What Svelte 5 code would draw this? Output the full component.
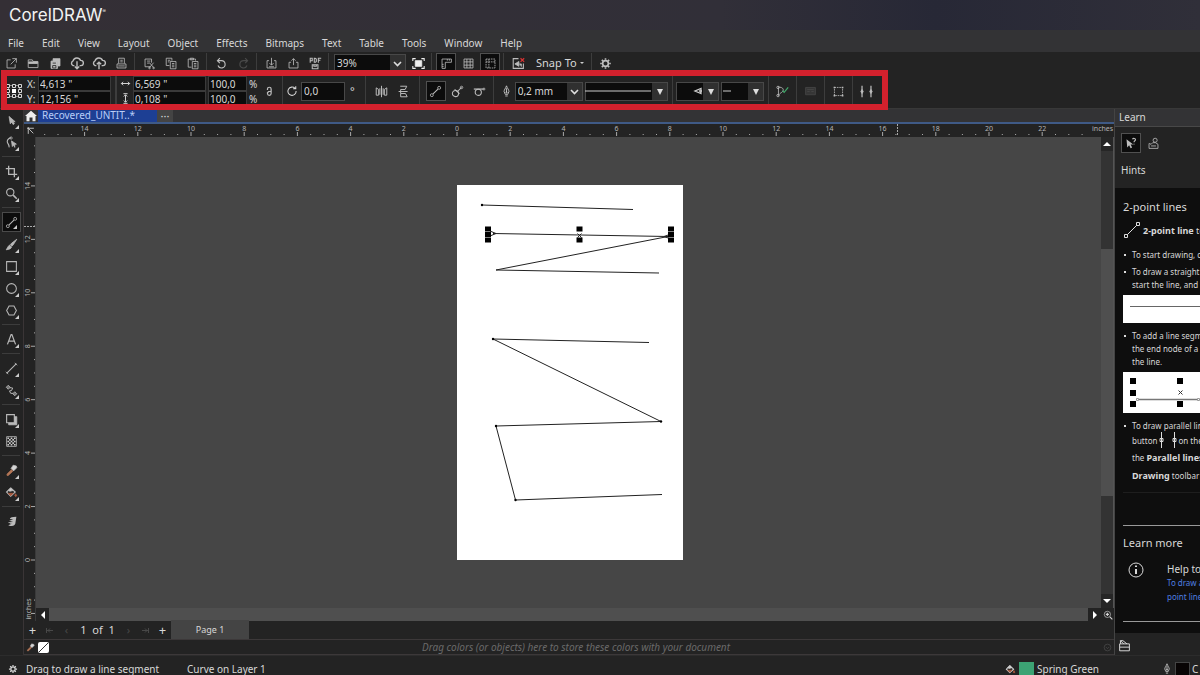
<script>
  const icons = {
    new: '<path d="M7 3.5H2.5v10h10V9M9 2h5v5M14 2 7 9"/>',
    open: '<path d="M1.5 13V3.5h5l1 2h6V13z"/><path fill="currentColor" d="M2 6h11v2H2z"/>',
    save: '<path fill="currentColor" d="M5 2h8.500v9H11V5H5z"/><path fill="currentColor" d="M2.500 5h8v9h-8z"/><path stroke="#232323" d="M4.500 7.500h4M4.500 10.500h4v3h-4z"/>',
    cloudDown: '<path stroke-width="1.600" d="M5 11H3.500a3 3 0 0 1 0-5.500A4.500 4.500 0 0 1 12 5a3 3 0 0 1 .5 6H11M8 6v8M5.500 12 8 14.500 10.500 12"/>',
    cloudUp: '<path stroke-width="1.600" d="M5 11H3.500a3 3 0 0 1 0-5.500A4.500 4.500 0 0 1 12 5a3 3 0 0 1 .5 6H11M8 15V7M5.500 9.500 8 7l2.500 2.500"/>',
    print: '<path d="M4.500 8V1.500h7V8M6.500 4h3M6.500 6h3M2.500 8.500h11v5h-11zM4 11h8"/>',
    cut: '<path d="M9 12H2.500V2.500h8V7M5 5h4M5 7.500h3M8 7l5 6M13 7l-5 6"/><circle cx="8" cy="13.500" r="1"/><circle cx="13" cy="13.500" r="1"/>',
    copy: '<path d="M5.500 10.500h-4v-9h7v3M3.500 4h3M3.500 6h2M6.500 5.500h7v9h-7zM8.500 8h3M8.500 10h3M8.500 12h3"/>',
    paste: '<path d="M5.500 12.500h-4v-10h9v2M4 1.500h4v2H4zM6.500 5.500h7v9h-7zM8.500 8h3M8.500 10h3M8.500 12h3"/>',
    undo: '<path stroke-width="1.400" d="M3 4.500h5a4.500 4.500 0 1 1-4.300 6M6 1.500l-3 3 3 3"/>',
    redo: '<g stroke="#4a4a4a"><path stroke-width="1.400" d="M13 4.500H8a4.500 4.500 0 1 0 4.300 6M10 1.500l3 3-3 3"/></g>',
    import: '<path d="M5 4.500H2.500v9h11v-9H11M8 1v9M5.500 7.500 8 10l2.500-2.500M5 12h6"/>',
    export: '<path d="M5 6.500H2.500v7h11v-7H11M8 10V2M5.500 4.500 8 2l2.500 2.500"/>',
    pdf: '<path stroke-width="1.300" d="M1.500 7V1.500h2.500v3H1.500M6.500 1.500h1l1.500 1v3l-1 1H6.500zM11.500 7V1.500H15M11.500 4H14"/><path stroke-width="1.300" d="M4 9.500h7v5H4zM6 9.500v2h3V10"/>',
    screen: '<path fill="#eee" stroke="#eee" d="M4 4.500h8v7H4z"/><path stroke="#eee" stroke-width="1.300" d="M1 5V2h3.500M11.500 2H15v3M15 11v3h-3.500M4.500 14H1v-3"/>',
    ruler: '<path d="M2.500 14V2.500H14v4H6.500V14zM9 2.500v2M11.500 2.500v2M2.500 9h2M2.500 11.500h2"/>',
    grid: '<path d="M2.500 2.500h11v11h-11zM6 2.500v11M10 2.500v11M2.500 6h11M2.500 10h11"/>',
    guides: '<path stroke-dasharray="2 1" d="M2.500 2.500h11v11h-11zM6 2.500v11M2.500 6h11"/>',
    snap: '<path stroke-width="1.300" d="M8 2H1.500v12H14V8"/><path fill="currentColor" d="m3.500 8.500 5-3v6zM9 8.500h2.500V12"/><path stroke="#d33" stroke-width="1.500" d="m10.500 1.500 4.500 4.500m0-4.500-4.500 4.500"/>',
    gear: '<circle cx="8" cy="8" r="3.500" stroke-width="2"/><path stroke-width="2" d="M8 1.500v2M8 12.500v2M1.500 8h2M12.500 8h2M3.500 3.500 5 5M11 11l1.500 1.500M3.500 12.500 5 11M11 5l1.500-1.500"/>',
    origin: '<path stroke="#888" d="M2 2.500h12M2 13.500h12M2.500 2v12M13.500 2v12"/><path fill="#232323" d="M.5 1.500h3v3h-3zM6.500 1.500h3v3h-3zM12.500 1.500h3v3h-3zM.5 6.500h3v3h-3zM12.500 6.500h3v3h-3zM.5 11.500h3v3h-3zM6.500 11.500h3v3h-3zM12.500 11.500h3v3h-3z"/><path fill="#fff" stroke="none" d="M6 6h4v4H6z"/>',
    width: '<path stroke-width="1.400" d="M2 8h12M4.500 5.500 2 8l2.500 2.500M11.500 5.500 14 8l-2.500 2.500"/>',
    height: '<path stroke-width="1.400" d="M8 3v10M5.500 5 8 2.500 10.500 5M5.500 11 8 13.500 10.500 11M5 1h6M5 15h6"/>',
    lock: '<path stroke-width="1.500" d="M5.500 6V5a2 2 0 0 1 4.500 0v3.500M7 8h3v2.500a2.200 2.200 0 0 1-4.500 0V9.500L7 8"/>',
    rotate: '<path stroke-width="1.400" d="M12 4.500A5.500 5.500 0 1 0 13.500 8M13 1.500V5H9.500"/>',
    mirrorH: '<path stroke-width="1.200" d="M1.500 3.500v9h3v-7l-3-2M8 1v14M14.500 3.500v9h-3v-7l3-2M6 4v8M10 4v8"/>',
    mirrorV: '<path stroke-width="1.200" d="M4 1.500h8l-2 4H4.500M2 8h11M4.500 10.500h6l2 4h-8zM4.500 5.500v5"/>',
    twoPoint: '<path stroke-width="1.300" d="M5 11 11 5"/><circle cx="3.500" cy="12.500" r="1.800"/><circle cx="12.500" cy="3.500" r="1.800"/>',
    perp: '<circle cx="5.500" cy="10.500" r="3.800" stroke-width="1.300"/><path stroke-width="1.300" d="m8 8 5-5M4.500 5.500l6 5"/><circle cx="13" cy="3" r="1.500"/>',
    tangent: '<circle cx="6.500" cy="9" r="3.800" stroke-width="1.300"/><path stroke-width="1.500" d="M1 5h12"/><circle cx="13.500" cy="5" r="1.200"/>',
    pen: '<path d="M8 1c-1 3-3 5-3 7l1.500 3.500h3L11 8c0-2-2-4-3-7zM6.500 13.500h3M8 4v5"/><circle cx="8" cy="9" r=".8"/>',
    curve: '<path d="M2.500 2.500c7 0 8 4 4.500 6.500-2 1.500-3 2-4.500 4.500M3 3v9"/><circle cx="2.500" cy="3" r="1.500"/><circle cx="2.500" cy="13" r="1.500"/><path stroke="#42a86b" stroke-width="1.500" d="m8 7 2 2 5-6"/>',
    wrap: '<g stroke="#484848"><path fill="#363636" d="M2 3h12v9H2z"/><path d="M4 5.500h8M4 8h3M9 8h3"/></g>',
    bounding: '<path stroke-dasharray="2 1" d="M3 3h10v10H3z"/><path fill="currentColor" stroke="none" d="M2 2h2v2H2zM12 2h2v2h-2zM2 12h2v2H2zM12 12h2v2h-2z"/>',
    parallel: '<path stroke-width="1.500" d="M2.500 1v14M13.500 1v14"/><path fill="currentColor" d="m2.500 5.500 1.500 2.500-1.500 2.500L1 8zM13.500 5.500 15 8l-1.500 2.500L12 8z"/>',
    pick: '<path fill="currentColor" d="m5 3 1.500 9L8.500 10l1.500 3 1.500-1-1.500-2.500h2.500z"/>',
    shape: '<path stroke-width="1.400" d="M7 2C4 3 2 5.500 3 8s2.500 3 2 6"/><circle cx="7.500" cy="2.500" r="1.400"/><path fill="currentColor" d="m8 6 1 7 1.500-2 1.500 3v-4h2z"/>',
    crop: '<path stroke-width="1.600" d="M4.500 1v10.500H15M1 4.500h10.500V15"/>',
    zoom: '<circle cx="6.500" cy="6.500" r="4.500" stroke-width="1.400"/><path stroke-width="2" d="m10 10 4.500 4.500"/>',
    brush: '<path fill="currentColor" d="M14.500 1.500 8 6.500 6.500 8 8.500 10l1.500-1.500zM6 9c-2 0-2 2-4.500 5.500C5 14 8 13 8 11z"/>',
    rect: '<path stroke-width="1.300" d="M2 2h12v12H2z"/>',
    ellipse: '<circle cx="8" cy="8" r="6" stroke-width="1.300"/>',
    polygon: '<path stroke-width="1.300" d="M5 2.500h6L14 8l-3 5.500H5L2 8z"/>',
    textTool: '<path stroke-width="1.500" d="M3 14 7.500 2h1L13 14M4.500 10h7"/>',
    dimension: '<path stroke-width="1.400" d="M2 14 14 2"/><path d="m1 12 3 3M12 1l3 3"/>',
    connector: '<path fill="#777" d="m4 1.500 2.500 2.500L4 6.500 1.500 4zM12 9.500l2.500 2.500-2.500 2.500L9.500 12z"/><path stroke-width="1.200" d="M6 4.500 9.500 5 8 8l-2.500.5L7 11.500h3"/>',
    shadow: '<path fill="#bbb" stroke="#bbb" d="M4.500 4.500h10v10h-10z"/><path fill="#232323" stroke-width="1.400" d="M2 2h9.500v10H2z"/>',
    checker: '<path fill="#222" stroke="#bbb" d="M2 2h12v12H2z"/><path stroke="#ccc" stroke-width="2" stroke-dasharray="2 2" d="M3 4h10M3 8h10M3 12h10"/><path stroke="#ccc" stroke-width="2" stroke-dasharray="2 2" d="M5 6h8M5 10h8"/>',
    dropper: '<path fill="#d5d5d5" stroke="#bbb" d="M10 1.500 14 2.500l.5 2-4 4-3-3z"/><path fill="#b87858" stroke="#b87858" d="m8 7 1.500 2-5.500 5H2.500v-1.500z"/>',
    bucket: '<path stroke-width="1.500" d="m7 2.500 5.500 5L7 12.500l-5-5z"/><path fill="#ccc" d="m7 2.500 3 3-4 1-2-1z"/><path fill="#a9583c" stroke="#a9583c" d="M4 9h6l-3 3zM13 9.500l1.500 2.500-1.500 1-1-1z"/>',
    feather: '<path fill="#bbb" stroke="none" d="M14 2c-5 0-8 1-8 3l4 .5L5 7l5 1.500-6 .5c1 2 3 2 5 1.500L4 12.500c5 2.500 9 .5 9-4z"/>',
    home: '<path fill="currentColor" stroke="none" d="M8 1 0 8h2v7h4v-5h4v5h4V8h2z"/>',
    corner: '<path stroke-width="1.500" d="M2 4h12M4 2v12M5 5l8 8"/>',
    hint: '<path fill="currentColor" stroke="none" d="m2 3 1 11 2.500-3 2 4 2-1-2-4H11z"/><path stroke-width="1.500" d="M10 3c1-2 4-1 4 .5S12 5 12 7M12 9v1"/>',
    person: '<circle cx="10" cy="4" r="2.500"/><path d="M2.500 8v6h11V9l-3-2H7L5 9 3 8zM5 11h6"/>',
    bag: '<path stroke-width="1.200" d="M2 6h12v8.500H2zM2 10h12M3 6V2h3l5 4M3 2l4 4"/>',
    info: '<circle cx="8" cy="8" r="7"/><path stroke-width="2" d="M8 7v5M8 3.500v1.500"/>',
    navZoom: '<circle cx="7" cy="7" r="5"/><path stroke-width="1.700" d="m11 11 4 4M4.500 7h5M7 4.500v5"/>',
    expand: '<circle cx="8" cy="8" r="6"/><path d="m5 7 3 3 3-3"/>'
  };

  const menus = ['File', 'Edit', 'View', 'Layout', 'Object', 'Effects', 'Bitmaps', 'Text', 'Table', 'Tools', 'Window', 'Help'];
  const fileTools = [
    ['new', 'open', 'save', 'cloudDown', 'cloudUp', 'print'],
    ['cut', 'copy', 'paste'],
    ['undo', 'redo'],
    ['import', 'export', 'pdf']
  ];
  const toolbox = [
    ['pick', 'shape'],
    ['crop', 'zoom'],
    ['twoPoint', 'brush', 'rect', 'ellipse', 'polygon'],
    ['textTool'],
    ['dimension', 'connector'],
    ['shadow', 'checker'],
    ['dropper', 'bucket'],
    ['feather']
  ];
  const noFlyout = ['checker', 'feather'];

  // Ruler scale, in half-inch steps from the page origin.
  const across = Array.from({ length: 80 }, (_, i) => {
    const half = i - 31;
    return { x: 421 + half * 13.3, label: half % 4 === 0 && half < 46 ? Math.abs(half / 2) : null };
  });
  const down = Array.from({ length: 36 }, (_, i) => {
    const half = i - 4;
    return { y: 423 - half * 13.36, label: half % 4 === 0 && half >= 0 ? half / 2 : null, long: half % 4 === 0 };
  });

  const handles = [488, 579.5, 671].flatMap((x) => [229.5, 235, 240.5].map((y) => ({ x, y }))).filter((h) => h.x !== 579.5 || h.y !== 235);
  const nodes = [[482, 205], [493, 339], [661, 421.5], [496, 426], [515.5, 500]];
  const hintHandles = [[7, 6], [7, 18], [7, 29], [54, 6], [54, 29]];
</script>

{#snippet icon(name, size = 14)}
  <svg class="icon" width={size} height={size} viewBox="0 0 16 16" fill="none" stroke="currentColor" aria-hidden="true">{@html icons[name]}</svg>
{/snippet}

{#snippet tool(name, on = false)}
  <button class="tool" class:on aria-label={name}>{@render icon(name, name.startsWith('cloud') ? 14 : 13)}</button>
{/snippet}

<div class="app">
  <header class="title"><span class="logo">CorelDRAW<sup>®</sup></span></header>

  <nav class="menu">
    {#each menus as m}<button>{m}</button>{/each}
  </nav>

  <div class="bar standard">
    {#each fileTools as group}
      {#each group as name}{@render tool(name)}{/each}
      <i class="sep"></i>
    {/each}
    <select class="field zoom" aria-label="Zoom level"><option>39%</option></select>
    {@render tool('screen')}
    <i class="sep"></i>
    {@render tool('ruler', true)}
    {@render tool('grid')}
    {@render tool('guides', true)}
    <i class="sep"></i>
    {@render tool('snap')}
    <button class="snapto">Snap To<i class="tiny"></i></button>
    <i class="sep"></i>
    {@render tool('gear')}
  </div>

  <div class="bar property">
    <span class="origin">{@render icon('origin', 16)}</span>
    <div class="pairs position">
      <label for="px">X:</label><input id="px" value={'4,613 "'} />
      <label for="py">Y:</label><input id="py" value={'12,156 "'} />
    </div>
    <i class="sep double"></i>
    <div class="pairs extent">
      <label for="pw" aria-label="Width">{@render icon('width', 11)}</label><input id="pw" value={'6,569 "'} />
      <label for="ph" aria-label="Height">{@render icon('height', 11)}</label><input id="ph" value={'0,108 "'} />
    </div>
    <div class="pairs scale">
      <input id="sx" value="100,0" /><label for="sx">%</label>
      <input id="sy" value="100,0" /><label for="sy">%</label>
    </div>
    {@render tool('lock')}
    <i class="sep"></i>
    <label class="angle">{@render icon('rotate', 12)}<input class="field" value="0,0" aria-label="Angle" /><span>°</span></label>
    <i class="sep wide"></i>
    {@render tool('mirrorH')}
    {@render tool('mirrorV')}
    <i class="sep wide"></i>
    {@render tool('twoPoint', true)}
    {@render tool('perp')}
    {@render tool('tangent')}
    <i class="sep"></i>
    <label class="outline" aria-label="Outline width">{@render icon('pen', 13)}<select class="field"><option>0,2 mm</option></select></label>
    <span class="combo line">
      <select class="field solid" aria-label="Line style"><option></option></select>
      <svg width="66" height="16" aria-hidden="true"><path d="M0 8h66" stroke="#ccc" /></svg>
    </span>
    <i class="sep"></i>
    <span class="combo">
      <select class="field solid" aria-label="Start arrowhead"><option></option></select>
      <svg width="29" height="16" aria-hidden="true"><path d="M26 8h-3M25 5.500v5L19 8z" fill="none" stroke="#ccc" stroke-width="1.300" /></svg>
    </span>
    <span class="combo">
      <select class="field solid" aria-label="End arrowhead"><option></option></select>
      <svg width="29" height="16" aria-hidden="true"><path d="M2 8h8" stroke="#ccc" /></svg>
    </span>
    {#each ['curve', 'wrap', 'bounding', 'parallel'] as name}
      <i class="sep"></i>
      {@render tool(name)}
    {/each}
    <div class="highlight"></div>
  </div>

  <div class="work">
    <aside class="toolbox">
      {#each toolbox as group, g}
        {#if g}<i class="rule"></i>{/if}
        {#each group as name}
          <button class:on={name === 'twoPoint'} class:fly={!noFlyout.includes(name)} aria-label={name}>{@render icon(name, 13)}</button>
        {/each}
      {/each}
    </aside>

    <main class="document">
      <div class="tabs">
        <button class="home" aria-label="Home">{@render icon('home', 12)}</button>
        <button class="tab">Recovered_UNTIT..*</button>
        <button class="more" aria-label="More">···</button>
      </div>

      <div class="view">
        <span class="corner">{@render icon('corner', 9)}</span>
        <svg class="ruler-x" aria-hidden="true">
          {#each across as t}
            {#if t.label !== null}
              <path d="M{t.x} 8v4" />
              <text x={t.x} y="7" text-anchor="middle">{t.label}</text>
            {:else}
              <path d="M{t.x} 10v1" />
            {/if}
          {/each}
          <path d="M861.500 0v12" stroke-dasharray="2 1" />
        </svg>
        <span class="unit">inches</span>

        <svg class="ruler-y" aria-hidden="true">
          {#each down as t}
            <path d="M{t.long ? 7 : 10} {t.y}h{t.long ? 4 : 1}" />
            {#if t.label !== null}
              <text transform="translate(6 {t.y}) rotate(-90)" text-anchor="middle">{t.label}</text>
            {/if}
          {/each}
          <path d="M0 89.500h12" stroke-dasharray="2 1" />
          <text transform="translate(7 472) rotate(-90)" text-anchor="middle">inches</text>
        </svg>

        <svg class="canvas" aria-label="Drawing page">
          <g transform="translate(-36 -137)" fill="none" stroke="#222">
            <rect x="457" y="185" width="226" height="375" fill="#fff" stroke="none" />
            <path d="M482 205 633 209.500M493 233.500 668 236.500 496 270 659 273M649 342.500 493 339 661 421.500 496 426 515.500 500 662 494.500" />
            <path d="m490 231 6 2.500-6 2.500M671 234l-7 2.500 7 2.500M577.500 233.500l4 4m0-4-4 4" />
            {#each nodes as [x, y]}<circle cx={x} cy={y} r="1.200" fill="#000" stroke="none" />{/each}
            {#each handles as h}<rect x={h.x - 3} y={h.y - 3} width="6" height="5" fill="#000" stroke="none" />{/each}
          </g>
        </svg>

        <div class="scroll-y">
          <button aria-label="Scroll up"><i class="tri up"></i></button>
          <div class="track"><div class="thumb"></div></div>
          <button aria-label="Scroll down"><i class="tri down"></i></button>
        </div>
        <div class="scroll-x">
          <button aria-label="Scroll left"><i class="tri left"></i></button>
          <div class="thumb"></div>
          <button aria-label="Scroll right"><i class="tri right"></i></button>
          <button aria-label="Navigator">{@render icon('navZoom', 10)}</button>
        </div>
      </div>

      <div class="pages">
        <button aria-label="Add page before">+</button>
        <button class="dim" aria-label="First page">{@render first()}</button>
        <button class="dim" aria-label="Previous page">‹</button>
        <span>1&nbsp; of&nbsp; 1</span>
        <button class="dim" aria-label="Next page">›</button>
        <button class="dim flip" aria-label="Last page">{@render first()}</button>
        <button aria-label="Add page after">+</button>
        <button class="page">Page 1</button>
      </div>

      <div class="palette">
        {@render icon('dropper', 9)}
        <button class="none" aria-label="No color"><svg width="11" height="11" aria-hidden="true"><path d="M1 10 10 1" stroke="#333" /></svg></button>
        <em>Drag colors (or objects) here to store these colors with your document</em>
        {@render icon('expand', 9)}
      </div>
    </main>

    <aside class="dock">
      <h2>Learn</h2>
      <div class="dock-tools">
        <button class="tool on" aria-label="Hints">{@render icon('hint', 12)}</button>
        {@render tool('person')}
      </div>
      <h3>Hints</h3>
      <section>
        <h4>2-point lines</h4>
        <p class="lead">
          <svg width="18" height="18" fill="#0e0e0e" stroke="#ddd" aria-hidden="true"><path d="M3 15 15 3" /><path d="M1.500 13.500h3v3h-3zM13.500 1.500h3v3h-3z" /></svg>
          <span><b>2-point line</b> tool</span>
        </p>
        <ul>
          <li>To start drawing, click</li>
          <li>To draw a straight<br />start the line, and</li>
        </ul>
        <div class="sample low"><svg width="100%" height="28" aria-hidden="true"><path d="M7 11.500h90" stroke="#666" /></svg></div>
        <ul>
          <li>To add a line segment<br />the end node of a<br />the line.</li>
        </ul>
        <div class="sample">
          <svg width="100%" height="41" aria-hidden="true">
            <path d="M15 27.500h60" stroke="#777" stroke-width="1.500" />
            <path d="m55.500 18.500 4 4m0-4-4 4" stroke="#333" />
            <path d="M13.500 26.500h2v2h-2zM74.500 26.500h2v2h-2z" fill="#fff" stroke="#999" />
            {#each hintHandles as [x, y]}<rect {x} {y} width="6" height="6" fill="#000" />{/each}
          </svg>
        </div>
        <ul class="last">
          <li>
            To draw parallel lines<br />
            <span class="row">button<svg width="21" height="18" fill="#0e0e0e" stroke="#ddd" aria-hidden="true"><path d="M4.500 1v16M17.500 1v16M3 7.500h3v3H3zM16 7.500h3v3h-3z" /></svg>on the</span>
            <span class="row">the&nbsp;<b>Parallel lines</b></span>
            <span class="row"><b>Drawing</b>&nbsp;toolbar</span>
          </li>
        </ul>
        <hr class="faint" />
        <hr />
        <h5>Learn more</h5>
        <div class="help">
          {@render icon('info', 16)}
          <div><strong>Help topic</strong><a href="#help">To draw a 2-<br />point line</a></div>
        </div>
        <hr />
      </section>
      <footer>{@render icon('bag', 13)}</footer>
    </aside>
  </div>

  <footer class="status">
    {@render icon('gear', 10)}
    <span class="msg">Drag to draw a line segment</span>
    <span>Curve on Layer 1</span>
    <div class="paint">
      {@render icon('bucket', 11)}<i class="swatch green"></i><span>Spring Green</span>
    </div>
    <div class="pen">{@render icon('pen', 12)}<i class="swatch black"></i><span>C</span></div>
  </footer>
</div>

{#snippet first()}
  <svg width="9" height="7" aria-hidden="true"><path d="M1.500 1v5M2 3.500h6M5 1.500l-2 2 2 2" fill="none" stroke="currentColor" /></svg>
{/snippet}

<style>
  :global(body) { margin: 0; background: #222; }
  .app { display: flex; flex-direction: column; height: 100vh; overflow: hidden; background: #232323; color: #d8d8d8; font: 11px/14px "Noto Sans", sans-serif; white-space: nowrap; }
  button, input, select { font: inherit; color: inherit; background: none; border: 0; padding: 0; margin: 0; border-radius: 0; box-sizing: border-box; }
  h2, h3, h4, h5, p, ul { margin: 0; font-weight: 400; }
  .icon { flex: none; display: block; }

  .title { height: 30px; padding-left: 9px; background: linear-gradient(90deg, #342f35, #312f38 60%, #272836 78%, #302f39); flex: none; }
  .logo { font: 17px/30px Inter, sans-serif; color: #f2f2f2; }
  .logo sup { font-size: 5px; line-height: 1px; vertical-align: 8px; }
  .menu { display: flex; gap: 18px; height: 22px; padding: 3px 8px 0; box-sizing: border-box; background: #333335; flex: none; font-size: 10px; }
  .menu button { height: 19px; }

  .bar { display: flex; align-items: center; flex: none; position: relative; }
  .standard { height: 22px; }
  .property { height: 35px; border-bottom: 1px solid #383838; box-sizing: border-box; }
  .tool { display: flex; align-items: center; justify-content: center; width: 22px; height: 20px; flex: none; color: #bdbdbd; }
  .tool.on { background: #0c0c0c; border: 1px solid #505050; width: 20px; margin: 0 1px; }
  .sep { width: 1px; height: 20px; background: #3d3d3d; margin: 0 3px 0 2px; flex: none; }
  .property .sep { height: 30px; }
  .field { height: 19px; background-color: #0c0c0c; border: 1px solid #484848; padding: 0 2px; font-size: 10px; }
  select.field { appearance: none; background: linear-gradient(#0c0c0c, #0c0c0c) 0 0 / calc(100% - 15px) 100% no-repeat, url("data:image/svg+xml,%3Csvg xmlns='http://www.w3.org/2000/svg' width='15' height='17'%3E%3Cpath d='m4 7 3.500 3.500L11 7' fill='none' stroke='%23ddd' stroke-width='1.600'/%3E%3C/svg%3E") right center no-repeat #303030; }
  select.solid { background-image: linear-gradient(#0c0c0c, #0c0c0c), url("data:image/svg+xml,%3Csvg xmlns='http://www.w3.org/2000/svg' width='15' height='17'%3E%3Cpath d='M5 6h6l-3 6z' fill='%23ddd'/%3E%3C/svg%3E"); }
  .zoom { width: 72px; margin: 0 1px 0 2px; }
  .snapto { display: flex; align-items: center; gap: 3px; margin: 0 5px 0 7px; }
  .tiny { border: 2px solid transparent; border-top-color: #ccc; border-bottom: 0; }

  .origin { width: 16px; padding-left: 6px; }
  .pairs { display: grid; gap: 0 2px; align-items: center; font-size: 10px; }
  .pairs input { width: 100%; height: 15px; background: #0c0c0c; border: 1px solid #3a3a3a; padding: 0 1px; }
  .position { grid-template-columns: 9px 73px; margin-left: 5px; }
  .extent { grid-template-columns: 11px 73px; margin-left: 1px; }
  .scale { grid-template-columns: 39px 9px; margin: 0 0 0 2px; }
  .double { width: 2px; margin: 0 2px 0 4px; }
  .angle { display: flex; align-items: center; gap: 3px; }
  .angle input { width: 44px; margin-right: 2px; }
  .angle + .sep { margin-left: 10px; }
  .sep.wide { margin-right: 5px; }
  .sep.wide:not(.angle + .sep) { margin-left: 4px; }
  .outline { display: flex; align-items: center; gap: 2px; margin: 0 2px 0 3px; }
  .outline select { width: 68px; }
  .combo { display: grid; align-items: center; width: 43px; margin-right: 2px; }
  .combo > * { grid-area: 1 / 1; pointer-events: none; }
  .combo select { width: 100%; pointer-events: auto; }
  .combo.line { width: 83px; }
  .highlight { position: absolute; left: 1px; top: -4px; width: 887px; height: 40px; border: 6px solid #d3212d; box-sizing: border-box; pointer-events: none; }

  .work { display: flex; flex: 1; min-height: 0; }
  .toolbox { width: 24px; border-right: 1px solid #3a3536; box-sizing: border-box; display: flex; flex-direction: column; flex: none; padding-right: 1px; }
  .toolbox button { position: relative; display: flex; align-items: center; justify-content: center; height: 22px; flex: none; color: #b8b8b8; }
  .toolbox .on { background: #0c0c0c; border: 1px solid #4a4a4a; margin: 1px 1px 1px 2px; height: 20px; }
  .toolbox .fly::after { content: ""; position: absolute; right: 3px; bottom: 2px; border: 2px solid; border-color: transparent #ccc #ccc transparent; }
  .rule { height: 1px; background: #3c3c3c; margin: 3px 2px; flex: none; }

  .document { flex: 1; min-width: 0; display: flex; flex-direction: column; }
  .tabs { display: flex; height: 15px; background: #333335; border-bottom: 2px solid #3f5a86; box-sizing: border-box; flex: none; }
  .home { padding: 1px 1px 0; color: #eee; }
  .tab { background: #1d3f94; color: #b9cdf8; width: 119px; padding-left: 4px; text-align: left; font-size: 10px; line-height: 13px; height: 13px; }
  .more { width: 16px; background: #444; line-height: 11px; height: 13px; }
  .view { flex: 1; min-height: 0; display: grid; grid-template: 13px 1fr 13px / 12px 1fr 13px; }
  .ruler-x, .ruler-y { width: 100%; height: 100%; overflow: hidden; stroke: #aaa; }
  .ruler-x text, .ruler-y text { font-size: 7px; fill: #b4b4b4; stroke: none; }
  .ruler-y { grid-row: 2 / 4; border-right: 1px solid #3a3a3a; box-sizing: border-box; }
  .corner { padding: 2px; }
  .unit { font-size: 7px; line-height: 10px; margin-left: -9px; background: #232323; color: #b4b4b4; z-index: 1; }
  .canvas { width: 100%; height: 100%; background: #464646; }
  .scroll-y { display: flex; flex-direction: column; background: #333; border-right: 1px solid #555; }
  .scroll-y button { height: 14px; display: grid; place-items: center; background: #262626; }
  .track { flex: 1; padding: 98px 0; }
  .track .thumb { height: 247px; background: #4f4f4f; }
  .scroll-x { grid-column: 2 / 4; display: flex; background: #232323; }
  .scroll-x .thumb { flex: 1; background: #4f4f4f; }
  .scroll-x button { width: 13px; display: grid; place-items: center; }
  .tri { border: 4px solid transparent; }
  .up { border-bottom-color: #fff; border-top: 0; }
  .down { border-top-color: #fff; border-bottom: 0; }
  .left { border-right-color: #fff; border-left: 0; }
  .right { border-left-color: #fff; border-right: 0; }

  .pages { display: flex; align-items: center; height: 20px; border-bottom: 1px solid #3c3839; box-sizing: border-box; flex: none; }
  .pages button { width: 17px; font-size: 13px; }
  .pages .dim { color: #484848; font-size: 11px; }
  .pages .flip { transform: scaleX(-1); }
  .pages span { width: 45px; text-align: center; }
  .pages .page { width: 78px; height: 19px; background: #444; font-size: 9px; }

  .palette { display: flex; align-items: center; gap: 3px; height: 15px; padding: 0 2px; border-bottom: 1px solid #3c3839; box-sizing: border-box; flex: none; color: #555; }
  .none { width: 11px; height: 11px; background: #fff; border-radius: 2px; display: grid; }
  .palette em { flex: 1; text-align: center; font-size: 10px; color: #6a6a6a; }

  .dock { width: 86px; flex: none; display: flex; flex-direction: column; overflow: hidden; border-left: 1px solid #444; box-sizing: border-box; margin-top: -1px; border-top: 1px solid #3d3d3d; }
  .dock h2 { background: #333335; border-bottom: 1px solid #484848; font-size: 10px; line-height: 17px; padding-left: 4px; flex: none; }
  .dock-tools { display: flex; padding: 6px 0 0 5px; }
  .dock h3 { font-size: 10px; line-height: 16px; padding: 9px 6px 10px; flex: none; }
  .dock section { flex: 1; background: #0e0e0e; padding: 11px 0 0 8px; overflow: hidden; font-size: 8px; line-height: 13px; }
  .dock h4 { font-size: 11px; line-height: 16px; }
  .lead { display: flex; align-items: center; gap: 2px; margin-top: 6px; height: 18px; font-size: 9px; }
  .lead svg, .row svg { flex: none; }
  .dock ul { list-style: none; padding: 0; margin: 9px 0 4px; }
  .dock li { position: relative; padding-left: 9px; margin-bottom: 4px; }
  .dock li::before { content: ""; position: absolute; left: 1px; top: 6px; width: 2px; height: 2px; background: #ddd; }
  .dock li:last-child { margin-bottom: 0; }
  .dock .sample + ul { margin: 6px 0 4px; }
  .sample { background: #fff; }
  .sample svg { display: block; }
  .row { display: flex; align-items: center; height: 18px; }
  .row b { font-size: 9px; }
  .row:first-of-type { height: 16px; }
  hr { height: 1px; border: 0; background: #999; margin: 32px 0 9px; }
  hr.faint { background: #1e1e1e; margin: 8px 0 0; }
  h5 { font-size: 11px; line-height: 16px; }
  .help { display: flex; gap: 23px; padding: 11px 5px 0; }
  .help strong { display: block; font-weight: 400; font-size: 10px; line-height: 14px; }
  .help a { display: block; color: #4f7fe0; text-decoration: none; line-height: 14px; }
  .help + hr { margin: 17px 0 0; }
  .dock footer { height: 22px; padding: 6px 3px 0; box-sizing: border-box; flex: none; }

  .status { display: flex; align-items: center; height: 20px; padding: 7px 0 0 8px; box-sizing: border-box; flex: none; border-top: 1px solid #2c2c2c; font-size: 10px; }
  .msg { width: 139px; margin: 0 22px 0 8px; }
  .paint, .pen { display: flex; align-items: center; gap: 3px; }
  .paint { margin-left: auto; width: 156px; }
  .pen { width: 39px; overflow: hidden; gap: 2px; }
  .swatch { width: 15px; height: 15px; flex: none; }
  .green { background: #3ca374; }
  .black { background: #080404; border: 1px solid #444; box-sizing: border-box; }
</style>
